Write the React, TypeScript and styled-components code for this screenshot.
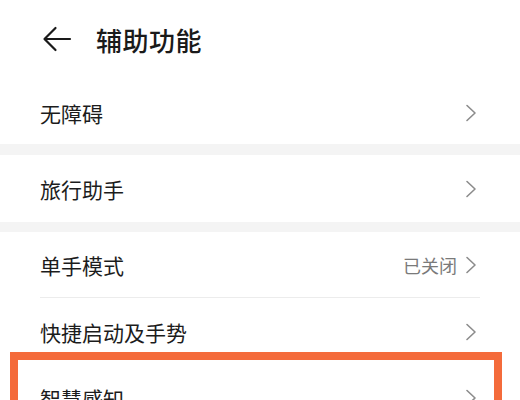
import React from "react";
import styled, { createGlobalStyle } from "styled-components";

const GlobalStyle = createGlobalStyle`
  html, body {
    margin: 0;
    padding: 0;
    background: #ffffff;
  }
  body {
    font-family: "Noto Sans CJK SC", "Noto Sans", sans-serif;
    color: #1b1b1b;
  }
`;

const Page = styled.div`
  position: relative;
  width: 520px;
  height: 400px;
  overflow: hidden;
  background: #ffffff;
`;

const Header = styled.div`
  height: 82px;
  display: flex;
  align-items: center;
  padding: 0 0 4px 42px;
  box-sizing: border-box;
  gap: 24px;
`;

const BackButton = styled.button`
  border: none;
  background: none;
  padding: 0;
  display: flex;
  align-items: center;
  cursor: pointer;
`;

const Title = styled.h1`
  margin: 0;
  font-size: 26px;
  font-weight: 500;
  color: #1a1a1a;
  letter-spacing: 0.5px;
`;

const Band = styled.div<{ $h: number }>`
  height: ${({ $h }) => $h}px;
  background: #f4f4f4;
`;

const Row = styled.div<{ $h: number }>`
  height: ${({ $h }) => $h}px;
  display: flex;
  align-items: center;
  justify-content: space-between;
  padding: 0 43px 0 40px;
  box-sizing: border-box;
`;

const Label = styled.span`
  font-size: 21px;
  color: #1c1c1c;
`;

const Right = styled.div`
  display: flex;
  align-items: center;
  gap: 8px;
`;

const Status = styled.span`
  font-size: 18px;
  color: #7a7a7a;
`;

const Divider = styled.div`
  height: 1px;
  margin: 0 40px;
  background: #ececec;
`;

const Highlight = styled.div`
  position: absolute;
  left: 10px;
  top: 352px;
  width: 492px;
  height: 80px;
  box-sizing: border-box;
  border: 8px solid #f46b3b;
  pointer-events: none;
`;

const Chevron = () => (
  <svg width="12" height="20" viewBox="0 0 12 20" fill="none">
    <path
      d="M2 2.5 L10 10 L2 17.5"
      stroke="#8c8c8c"
      strokeWidth="1.6"
      strokeLinecap="round"
      strokeLinejoin="round"
    />
  </svg>
);

const BackArrow = () => (
  <svg width="30" height="26" viewBox="0 0 30 26" fill="none">
    <path
      d="M28 13 H3 M13.5 2 L2.5 13 L13.5 24"
      stroke="#1a1a1a"
      strokeWidth="2.2"
      strokeLinecap="round"
      strokeLinejoin="round"
    />
  </svg>
);

const Item: React.FC<{ label: string; status?: string; h: number }> = ({
  label,
  status,
  h,
}) => (
  <Row $h={h}>
    <Label>{label}</Label>
    <Right>
      {status && <Status>{status}</Status>}
      <Chevron />
    </Right>
  </Row>
);

export default function App() {
  return (
    <>
      <GlobalStyle />
      <Page>
        <Header>
          <BackButton aria-label="返回">
            <BackArrow />
          </BackButton>
          <Title>辅助功能</Title>
        </Header>
        <Item label="无障碍" h={62} />
        <Band $h={11} />
        <Item label="旅行助手" h={67} />
        <Band $h={10} />
        <Item label="单手模式" status="已关闭" h={65} />
        <Divider />
        <Item label="快捷启动及手势" h={68} />
        <Item label="智慧感知" h={64} />
        <Highlight />
      </Page>
    </>
  );
}
